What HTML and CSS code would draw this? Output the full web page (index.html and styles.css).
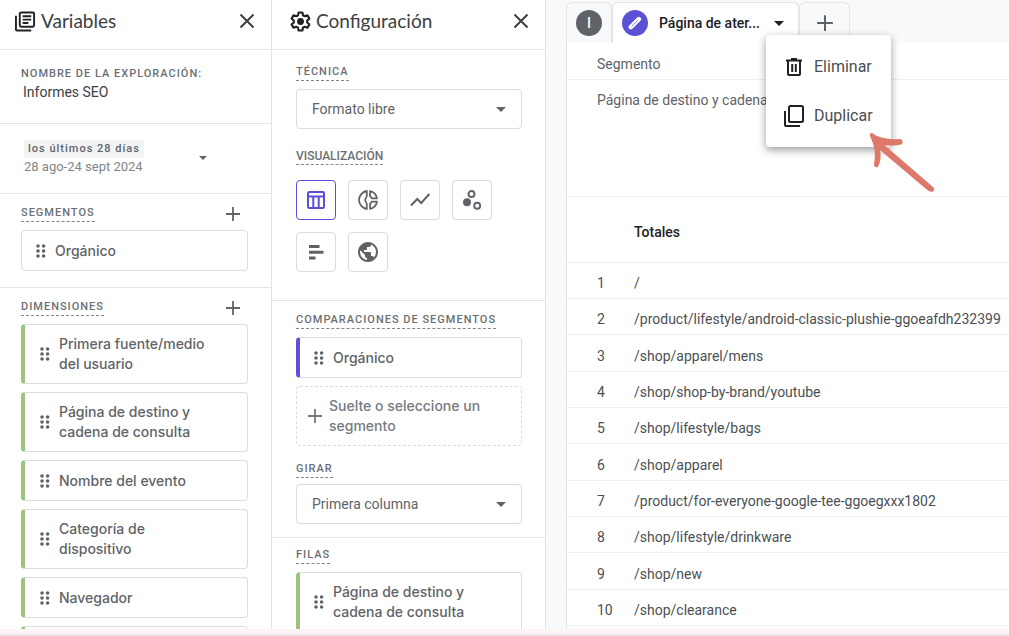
FILE: index.html
```html
<!DOCTYPE html>
<html lang="es">
<head>
<meta charset="utf-8">
<meta name="viewport" content="width=device-width, initial-scale=1">
<title>Exploración: Informes SEO</title>
<link rel="stylesheet" href="styles.css">
</head>
<body>
<svg class="sprite" aria-hidden="true">
  <symbol id="close" viewBox="0 0 16 16"><path d="M1.5 1.5l13 13M14.5 1.5l-13 13" fill="none" stroke="currentColor" stroke-width="2"/></symbol>
  <symbol id="plus" viewBox="0 0 16 16"><path d="M8 1v14M1 8h14" fill="none" stroke="currentColor" stroke-width="1.8"/></symbol>
  <symbol id="grip" viewBox="0 0 10 14"><g fill="currentColor"><circle cx="2" cy="2" r="1.8"/><circle cx="7.6" cy="2" r="1.8"/><circle cx="2" cy="7" r="1.8"/><circle cx="7.6" cy="7" r="1.8"/><circle cx="2" cy="12" r="1.8"/><circle cx="7.6" cy="12" r="1.8"/></g></symbol>
  <symbol id="caret" viewBox="0 0 10 5"><path d="M0 0h10L5 5z" fill="currentColor"/></symbol>
</svg>
<div class="app">
  <main class="workspace">
    <section class="panel" aria-label="Variables">
      <header class="panel-head">
        <svg class="head-icon" viewBox="0 0 22 22" fill="none" stroke="currentColor" stroke-width="2"><rect x="5" y="1.5" width="15" height="15" rx="1.5"/><path d="M1 5v14.5q0 1 1 1h15M8 5.5h9M8 9h9M8 12.5h6"/></svg>
        <h2 class="panel-title">Variables</h2>
        <button class="icon-button" aria-label="Cerrar Variables"><svg class="close-icon"><use href="#close"/></svg></button>
      </header>
      <div class="block name-block">
        <label class="overline" for="name">NOMBRE DE LA EXPLORACIÓN:</label>
        <input class="name-input" id="name" type="text" value="Informes SEO">
      </div>
      <button class="block date-block">
        <span class="date-text"><span class="date-tag">los últimos 28 días</span><span class="date-range">28 ago-24 sept 2024</span></span>
        <svg class="caret small"><use href="#caret"/></svg>
      </button>
      <div class="block segment-block">
        <div class="block-head"><h3 class="overline dashed">SEGMENTOS</h3><button class="icon-button" aria-label="Añadir segmento"><svg class="plus-icon"><use href="#plus"/></svg></button></div>
        <div class="chip"><svg class="grip"><use href="#grip"/></svg><span>Orgánico</span></div>
      </div>
      <div class="block dimension-block">
        <div class="block-head"><h3 class="overline dashed">DIMENSIONES</h3><button class="icon-button" aria-label="Añadir dimensión"><svg class="plus-icon"><use href="#plus"/></svg></button></div>
        <div class="chips">
          <div class="chip green"><svg class="grip"><use href="#grip"/></svg><span>Primera fuente/medio<br>del usuario</span></div>
          <div class="chip green"><svg class="grip"><use href="#grip"/></svg><span>Página de destino y<br>cadena de consulta</span></div>
          <div class="chip green"><svg class="grip"><use href="#grip"/></svg><span>Nombre del evento</span></div>
          <div class="chip green"><svg class="grip"><use href="#grip"/></svg><span>Categoría de<br>dispositivo</span></div>
          <div class="chip green"><svg class="grip"><use href="#grip"/></svg><span>Navegador</span></div>
          <div class="chip green"></div>
        </div>
      </div>
    </section>

    <section class="panel config" aria-label="Configuración">
      <header class="panel-head">
        <svg class="head-icon" viewBox="0 0 22 22" fill="none" stroke="currentColor" stroke-width="2.2" stroke-linejoin="round"><path d="M9 1.5h4l.6 3 1.8 1 2.9-1 2 3.5L18 10v2l2.3 2-2 3.500-2.900-1-1.800 1-.6 3H9l-.6-3-1.800-1-2.900 1-2-3.500L4 12v-2L1.700 8l2-3.500 2.900 1 1.800-1z"/><circle cx="11" cy="11" r="3.600" fill="currentColor" stroke="none"/></svg>
        <h2 class="panel-title">Configuración</h2>
        <button class="icon-button" aria-label="Cerrar Configuración"><svg class="close-icon"><use href="#close"/></svg></button>
      </header>
      <div class="block settings-block">
        <label class="overline dashed" for="tech">TÉCNICA</label>
        <div class="select-box"><select id="tech" class="select"><option>Formato libre</option></select><svg class="caret"><use href="#caret"/></svg></div>
        <h3 class="overline dashed vis-title">VISUALIZACIÓN</h3>
        <div class="vis-grid">
          <button class="vis selected" aria-label="Tabla"><svg viewBox="0 0 20 20" fill="none" stroke="currentColor" stroke-width="2"><rect x="2" y="2" width="16" height="16" rx="1"/><path d="M2 6.500h16M7.300 6.500V18M12.700 6.500V18"/></svg></button>
          <button class="vis" aria-label="Gráfico de anillos"><svg viewBox="0 0 20 20" fill="none" stroke="currentColor" stroke-width="1.800" stroke-linejoin="round"><path d="M8.800 1v5L7 10l1.800 4v5A9.100 9.100 0 0 1 8.800 1zM12 1.100a9 9 0 0 1 7 7.300h-5L12 6zM19 11.600a9 9 0 0 1-7 7.300V14l2-2.400z"/></svg></button>
          <button class="vis" aria-label="Gráfico de líneas"><svg viewBox="0 0 20 20" fill="none" stroke="currentColor" stroke-width="2"><path d="M1 15.500L7.300 9l4 4L19.300 4"/></svg></button>
          <button class="vis" aria-label="Gráfico de dispersión"><svg viewBox="0 0 20 20" fill="none" stroke="currentColor" stroke-width="1.900"><circle cx="9.500" cy="4" r="3"/><circle cx="5" cy="12.200" r="4" fill="currentColor" stroke="none"/><circle cx="15.200" cy="15.800" r="3"/></svg></button>
          <button class="vis" aria-label="Gráfico de barras"><svg viewBox="0 0 20 20" fill="currentColor"><path d="M3 3h10.500v3H3zM3 8.800h14.500v3H3zM3 14.500h6.500v3H3z"/></svg></button>
          <button class="vis" aria-label="Mapa geográfico"><svg viewBox="2 2 20 20" fill="currentColor"><path d="M12 2C6.480 2 2 6.480 2 12s4.480 10 10 10 10-4.480 10-10S17.520 2 12 2zm-1 17.930c-3.950-.49-7-3.850-7-7.930 0-.62.080-1.210.21-1.790L9 15v1c0 1.100.9 2 2 2v1.930zm6.900-2.540c-.26-.81-1-1.390-1.900-1.390h-1v-3c0-.55-.45-1-1-1H8v-2h2c.55 0 1-.45 1-1V7h2c1.100 0 2-.9 2-2v-.41c2.930 1.190 5 4.060 5 7.410 0 2.080-.8 3.970-2.100 5.390z"/></svg></button>
        </div>
      </div>
      <div class="block compare-block">
        <h3 class="overline dashed">COMPARACIONES DE SEGMENTOS</h3>
        <div class="chip violet"><svg class="grip"><use href="#grip"/></svg><span>Orgánico</span></div>
        <button class="drop"><svg class="plus-icon"><use href="#plus"/></svg><span>Suelte o seleccione un<br>segmento</span></button>
        <label class="overline dashed" for="pivot">GIRAR</label>
        <div class="select-box pivot-box"><select id="pivot" class="select"><option>Primera columna</option></select><svg class="caret"><use href="#caret"/></svg></div>
      </div>
      <div class="block rows-block">
        <h3 class="overline dashed">FILAS</h3>
        <div class="chip green"><svg class="grip"><use href="#grip"/></svg><span>Página de destino y<br>cadena de consulta</span></div>
      </div>
    </section>

    <section class="canvas" aria-label="Exploración">
      <nav class="tabs">
        <button class="tab" aria-label="Pestaña I"><span class="badge dark">I</span></button>
        <div class="tab active">
          <span class="badge violet-bg"><svg viewBox="0 0 14 14" fill="none" stroke="#fff" stroke-linecap="round"><path d="M2.800 11.200l8-8" stroke-width="4.500"/><path d="M4 10l5.500-5.500" stroke="#8d87ee" stroke-width="1"/></svg></span>
          <span class="tab-name">Página de ater...</span>
          <button class="icon-button" aria-label="Opciones de pestaña"><svg class="caret"><use href="#caret"/></svg></button>
          <div class="menu" role="menu">
            <button class="menu-item" role="menuitem"><svg viewBox="0 0 20 20" fill="none" stroke="currentColor" stroke-width="2"><path d="M2 3.500h16M7 2h6M4 4v13q0 1 1 1h10q1 0 1-1V4M8.200 7v8M11.800 7v8"/></svg>Eliminar</button>
            <button class="menu-item" role="menuitem"><svg class="copy" viewBox="0 0 20 22" fill="none" stroke="currentColor" stroke-width="2"><rect x="5" y="1" width="14" height="16" rx="1.500"/><path d="M1 6v14q0 1 1 1h14"/></svg>Duplicar</button>
            <svg class="pointer" viewBox="0 0 66 62" aria-hidden="true"><path d="M3 1Q12 8 31 7q4 1 2 5-4 2-17 1.500L64 55q3 3-1 5-3 0-6-3L11 18q2 9-2 17-4 1-4-3Q8 18 1 4q-1-3 2-3z" fill="#de786b"/></svg>
          </div>
        </div>
        <button class="tab add" aria-label="Añadir pestaña"><svg><use href="#plus"/></svg></button>
      </nav>
      <div class="sheet">
        <div class="segment-row">Segmento</div>
        <div class="dimension-row">Página de destino y cadena de consulta</div>
        <table class="table">
          <thead><tr><td></td><th scope="col">Totales</th></tr></thead>
          <tbody>
            <tr><td>1</td><td>/</td></tr>
            <tr><td>2</td><td>/product/lifestyle/android-classic-plushie-ggoeafdh232399</td></tr>
            <tr><td>3</td><td>/shop/apparel/mens</td></tr>
            <tr><td>4</td><td>/shop/shop-by-brand/youtube</td></tr>
            <tr><td>5</td><td>/shop/lifestyle/bags</td></tr>
            <tr><td>6</td><td>/shop/apparel</td></tr>
            <tr><td>7</td><td>/product/for-everyone-google-tee-ggoegxxx1802</td></tr>
            <tr><td>8</td><td>/shop/lifestyle/drinkware</td></tr>
            <tr><td>9</td><td>/shop/new</td></tr>
            <tr><td>10</td><td>/shop/clearance</td></tr>
          </tbody>
        </table>
      </div>
    </section>
  </main>
  <div class="bottom-edge"></div>
</div>
</body>
</html>
```
FILE: styles.css
```css
* { box-sizing: border-box; }
body { margin: 0; font-family: Roboto, "Liberation Sans", sans-serif; font-size: 14px; line-height: 20px; color: #5f6368; background: #fff; }
button, input, select { font: inherit; color: inherit; margin: 0; padding: 0; border: 0; background: none; }
h2, h3 { margin: 0; }
svg { display: block; flex: none; }
.sprite { position: absolute; width: 0; height: 0; }

.app { display: flex; flex-direction: column; height: 100vh; overflow: hidden; }
.workspace { flex: 1; min-height: 0; display: grid; grid-template-columns: 272px 274px minmax(0, 1fr); background: #f8f9fb; }
.bottom-edge { height: 7px; background: #fdf5f3; border-bottom: 2px solid #e9e6e6; }

.panel { min-height: 0; overflow: hidden; background: #fff; border-right: 1px solid #e3e4e7; }
.panel-head { display: flex; align-items: center; height: 50px; padding: 0 16px 7px 15px; border-bottom: 1px solid #e3e4e7; color: #202124; }
.head-icon { width: 21px; height: 21px; margin-right: 5px; }
.panel-title { flex: 1; font: 400 19px/24px Lato, sans-serif; color: #3c4043; }
.config .panel-head { padding-left: 18px; }
.icon-button { display: flex; }
.close-icon { width: 16px; height: 16px; color: #3c4043; }
.plus-icon { width: 16px; height: 16px; }

.block { border-bottom: 1px solid #e3e4e7; padding: 0 23px 0 21px; }
.config .block { padding-left: 24px; padding-right: 23px; }
.overline { display: block; width: fit-content; font-size: 11px; font-weight: 500; line-height: 16px; letter-spacing: 1px; color: #6b6f73; }
.dashed { border-bottom: 1px dashed #80868b; }
.name-block { height: 74px; padding-top: 16px; }
.name-input { display: block; width: 100%; height: 20px; padding-left: 2px; color: #3c4043; }
.date-block { display: flex; align-items: center; justify-content: space-between; width: 100%; height: 70px; padding: 0 64px 2px 24px; text-align: left; }
.date-text { display: flex; flex-direction: column; align-items: flex-start; font-size: 13px; line-height: 18px; color: #80868b; }
.date-tag { padding: 0 4px; background: #f1f3f4; font-size: 11px; font-weight: 500; letter-spacing: 1px; color: #5f6368; }
.block-head { display: flex; align-items: center; justify-content: space-between; padding-right: 7px; margin-bottom: 8px; }
.segment-block { height: 94px; padding-top: 11px; }
.dimension-block { padding-top: 11px; }

.chips { display: flex; flex-direction: column; gap: 8px; }
.chip { display: flex; align-items: center; min-height: 41px; padding: 9px 12px; border: 1px solid #dadce0; border-radius: 4px; font: 500 14px/20px Inter, sans-serif; }
.chip.green { border-left: 4px solid #9bc37d; }
.chip.violet { border-left: 4px solid #5b50d6; }
.chips .chip { padding-left: 13px; }
.grip { width: 10px; height: 14px; margin: 0 9px 0 2px; }

.settings-block { height: 251px; padding-top: 14px; }
.select-box { display: grid; align-items: center; height: 40px; margin-top: 8px; border: 1px solid #dadce0; border-radius: 4px; }
.select { grid-area: 1 / 1; appearance: none; width: 100%; height: 38px; padding: 0 32px 0 15px; }
.select-box .caret { grid-area: 1 / 1; justify-self: end; margin-right: 15px; pointer-events: none; }
.caret { width: 10px; height: 5px; }
.caret.small { width: 8px; height: 4px; }
.vis-title { margin-top: 19px; letter-spacing: 0; font-size: 12px; }
.vis-grid { display: grid; grid-template-columns: repeat(4, 40px); gap: 12px; margin-top: 15px; }
.vis { display: grid; place-items: center; height: 40px; border: 1px solid #dadce0; border-radius: 4px; }
.vis svg { width: 20px; height: 20px; }
.vis.selected { border-color: #5b50d6; color: #5b50d6; }
.compare-block { height: 237px; padding-top: 11px; }
.compare-block .chip, .rows-block .chip { margin-top: 8px; }
.drop { display: flex; align-items: center; gap: 6px; width: 100%; height: 60px; margin: 8px 0 15px; padding: 0 10px; border: 1px dashed #dadce0; border-radius: 4px; font: 500 14px/20px Inter, sans-serif; text-align: left; color: #757a7f; }
.pivot-box { margin-top: 6px; }
.rows-block { padding-top: 9px; }

.canvas { display: flex; flex-direction: column; min-width: 0; min-height: 0; padding-left: 20px; overflow: hidden; }
.tabs { display: flex; height: 43px; padding: 2px 0 0; }
.tab { position: relative; display: flex; align-items: center; justify-content: center; width: 46px; border: 1px solid #e3e4e7; border-bottom: 0; border-radius: 6px 6px 0 0; }
.tab.active { width: 187px; justify-content: flex-start; padding: 0 14px 0 9px; background: #fff; color: #202124; }
.tab.add { width: 51px; }
.tab.add svg { width: 18px; height: 18px; }
.badge { display: grid; place-items: center; width: 26px; height: 26px; border-radius: 50%; color: #fff; font-weight: 500; }
.badge svg { width: 14px; height: 14px; }
.dark { background: #5f6368; }
.violet-bg { background: #5b50d6; }
.tab-name { flex: 1; margin-left: 11px; font-weight: 500; white-space: nowrap; }
.menu { position: absolute; z-index: 1; top: 32px; left: 153px; width: 125px; padding: 7px 0; border-radius: 4px; background: #fff; box-shadow: 0 3px 8px rgba(0, 0, 0, .4); }
.menu-item { display: flex; align-items: center; gap: 10px; width: 100%; height: 49px; padding-left: 18px; font-size: 16px; color: #4b4f53; }
.menu-item svg { width: 20px; height: 20px; color: #202124; }
.menu-item .copy { height: 22px; }
.pointer { position: absolute; top: 97px; left: 102px; width: 68px; height: 62px; }

.sheet { flex: 1; min-height: 0; background: #fff; border-left: 1px solid #e3e4e7; overflow: hidden; }
.segment-row { height: 37px; padding: 11px 30px 0; border-bottom: 1px solid #eceef0; }
.dimension-row { height: 117px; padding: 10px 30px; border-bottom: 1px solid #eceef0; }
.table { width: 100%; border-collapse: separate; border-spacing: 0; color: #4b4f53; }
.table th, .table td { height: 36px; padding: 5px 0 0; border-bottom: 1px solid #eceef0; text-align: left; white-space: nowrap; }
.table tbody tr:nth-child(3n) td { height: 37px; }
.table thead th, .table thead td { height: 66px; font-weight: 500; color: #202124; }
.table td:first-child { width: 67px; padding-left: 30px; }
```
